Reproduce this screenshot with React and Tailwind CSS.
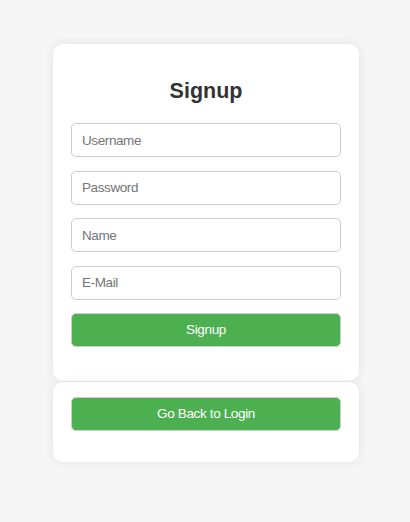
import React from 'react';

const fields = ['Username', 'Password', 'Name', 'E-Mail'];

export default function App() {
  return (
    <div
      className="min-h-[522px] bg-[#f5f5f5] flex flex-col items-center pt-[44px] pl-[2px]"
      style={{ fontFamily: '"Liberation Sans", Arial, sans-serif' }}
    >
      <div className="w-[306px] bg-white rounded-[10px] shadow-[0_0_10px_rgba(0,0,0,0.08)] px-[18px] pt-[35px] pb-[34px]">
        <h2 className="text-center text-[21.5px] leading-[25px] font-bold text-[#333] mb-[19px]">Signup</h2>
        <div className="flex flex-col gap-[13.5px]">
          {fields.map((f) => (
            <input
              key={f}
              type={f === 'Password' ? 'password' : 'text'}
              placeholder={f}
              className="h-[34px] w-full px-[10px] text-[13.5px] tracking-[-0.4px] border border-[#ccc] rounded-[5px] bg-white placeholder:text-[#757575] outline-none"
            />
          ))}
          <button className="h-[34px] w-full bg-[#4caf50] text-white text-[13.5px] tracking-[-0.35px] border border-[#ccc] rounded-[5px]">
            Signup
          </button>
        </div>
      </div>
      <div className="w-[306px] bg-white rounded-[10px] shadow-[0_0_10px_rgba(0,0,0,0.08)] px-[18px] pt-[15px] pb-[31px] mt-[1px]">
        <button className="h-[34px] w-full bg-[#4caf50] text-white text-[13.5px] tracking-[-0.35px] border border-[#ccc] rounded-[5px]">
          Go Back to Login
        </button>
      </div>
    </div>
  );
}
